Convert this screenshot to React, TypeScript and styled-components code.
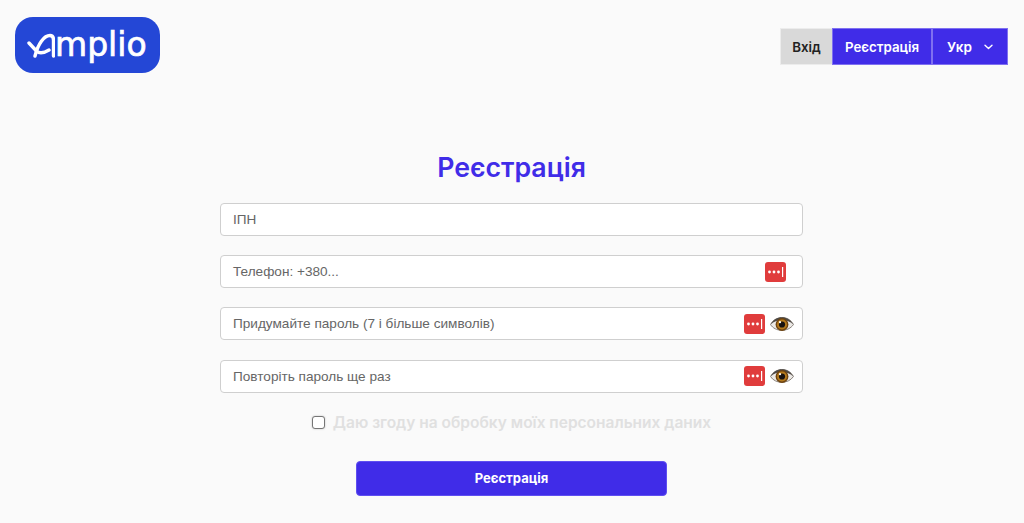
import React from 'react';
import styled, { createGlobalStyle } from 'styled-components';

const GlobalStyle = createGlobalStyle`
  html, body {
    margin: 0;
    padding: 0;
    background: #fafafa;
  }
  body {
    font-family: Inter, "Noto Sans", sans-serif;
    overflow: hidden;
  }
`;

const Page = styled.div`
  width: 1024px;
  height: 523px;
  display: flex;
  flex-direction: column;
`;

const Header = styled.header`
  display: flex;
  justify-content: space-between;
  align-items: flex-start;
  padding: 17px 16px 0 15px;
  height: 56px;
`;

const Logo = styled.div`
  width: 145px;
  height: 56px;
  border-radius: 18px;
  background: #2447d6;
  color: #fff;
  display: flex;
  align-items: center;
  padding-left: 12px;
  box-sizing: border-box;
`;

const LogoText = styled.span`
  font-family: "DejaVu Sans", sans-serif;
  font-size: 33px;
  line-height: 1;
  -webkit-text-stroke: 0.7px #fff;
  position: relative;
  top: -1px;
`;

const Nav = styled.nav`
  display: flex;
  margin-top: 11px;
  height: 37px;
`;

const NavItem = styled.a<{ $light?: boolean; $width: number }>`
  width: ${p => p.$width}px;
  display: flex;
  align-items: center;
  justify-content: center;
  gap: 9px;
  box-sizing: border-box;
  font-size: 13.3px;
  font-weight: 600;
  background: ${p => (p.$light ? '#d9d9d9' : '#402ce8')};
  color: ${p => (p.$light ? '#222' : '#fff')};
  border: 1px solid ${p => (p.$light ? '#ececec' : '#7f70f0')};
  border-right-width: ${p => (p.$light ? 0 : 1)}px;
`;

const LangLabel = styled.span`
  margin-right: 3px;
  font-size: 13.6px;
`;

const Main = styled.main`
  width: 583px;
  margin: 76px 0 0 220px;
  display: flex;
  flex-direction: column;
  align-items: center;
`;

const Title = styled.h1`
  margin: 0 0 18px;
  font-size: 26.7px;
  line-height: 36px;
  font-weight: 600;
  color: #402ce8;
`;

const Fields = styled.div`
  width: 100%;
  display: flex;
  flex-direction: column;
  gap: 19.2px;
`;

const Field = styled.div<{ $roomy?: boolean }>`
  height: 33px;
  box-sizing: border-box;
  border: 1px solid #cfcfcf;
  border-radius: 4px;
  background: #fff;
  display: flex;
  align-items: center;
  padding: 0 ${p => (p.$roomy ? 16 : 8)}px 0 12px;
  gap: 5px;
`;

const Placeholder = styled.span`
  flex: 1;
  font-family: "Liberation Sans", Arial, sans-serif;
  font-size: 13.6px;
  color: #666;
`;

const Consent = styled.label`
  display: flex;
  align-items: center;
  gap: 8px;
  margin-top: 20px;
  font-size: 15.5px;
  font-weight: 600;
  color: #e0e0e0;
  line-height: 20px;
`;

const Checkbox = styled.span`
  width: 13px;
  height: 13px;
  box-sizing: border-box;
  border: 1.5px solid #767676;
  border-radius: 3px;
  background: #fff;
  box-shadow: 0 0 2px rgba(0, 0, 0, 0.25);
`;

const Submit = styled.button`
  width: 311px;
  height: 35px;
  margin-top: 28px;
  border: 1px solid #5f4ff0;
  border-radius: 4px;
  background: #402ce8;
  color: #fff;
  font-family: inherit;
  font-size: 13px;
  font-weight: 700;
`;

const LogoMark = () => (
  <svg width="28" height="30" viewBox="0 0 28 30" fill="none" stroke="#fff" strokeWidth="3.4" strokeLinecap="round" strokeLinejoin="round">
    <path d="M2 13 L9 20.5 C12 24 17 23 22 20" />
    <path d="M8 26 C11 14 17 5.5 23 5.5 C25 5.5 26.5 7 26.5 10 L26.5 26" />
  </svg>
);

const Chevron = () => (
  <svg width="9" height="6" viewBox="0 0 9 6" fill="none" stroke="#fff" strokeWidth="1.4" strokeLinecap="round" strokeLinejoin="round">
    <path d="M1 1.2 L4.5 4.6 L8 1.2" />
  </svg>
);

const KeyIcon = () => (
  <svg width="21" height="20" viewBox="0 0 21 20">
    <rect width="21" height="20" rx="3" fill="#e03c3c" />
    <circle cx="4.5" cy="10" r="1.4" fill="#fff" />
    <circle cx="9" cy="10" r="1.4" fill="#fff" />
    <circle cx="13.5" cy="10" r="1.4" fill="#fff" />
    <rect x="17" y="5" width="1.2" height="10" fill="#fff" />
  </svg>
);

const EyeIcon = () => (
  <svg width="24" height="18" viewBox="0 0 24 18">
    <path d="M0.5 9.5 C5 1 18 -0.5 23.5 9.5 C18 17.5 5 17 0.5 9.5 Z" fill="#ece9e6" stroke="#8a837c" strokeWidth="1" />
    <path d="M0.8 9.5 C5 0.5 18 -0.5 23.2 9.5 C18 3.5 6 3.5 0.8 9.5 Z" fill="#4e4945" />
    <circle cx="12" cy="9.5" r="6.4" fill="#6e4310" />
    <circle cx="12" cy="9.5" r="5" fill="#b57a1c" />
    <circle cx="12" cy="9.5" r="3.1" fill="#181210" />
    <circle cx="10" cy="7.2" r="1.1" fill="#fff" />
  </svg>
);

const fields = [
  { label: 'ІПН' },
  { label: 'Телефон: +380...', key: true },
  { label: 'Придумайте пароль (7 і більше символів)', key: true, eye: true },
  { label: 'Повторіть пароль ще раз', key: true, eye: true },
];

export default function App() {
  return (
    <Page>
      <GlobalStyle />
      <Header>
        <Logo>
          <LogoMark />
          <LogoText>mplio</LogoText>
        </Logo>
        <Nav>
          <NavItem $light $width={52}>Вхід</NavItem>
          <NavItem $width={100}>Реєстрація</NavItem>
          <NavItem $width={76}><LangLabel>Укр</LangLabel><Chevron /></NavItem>
        </Nav>
      </Header>
      <Main>
        <Title>Реєстрація</Title>
        <Fields>
          {fields.map(f => (
            <Field key={f.label} $roomy={f.key && !f.eye}>
              <Placeholder>{f.label}</Placeholder>
              {f.key && <KeyIcon />}
              {f.eye && <EyeIcon />}
            </Field>
          ))}
        </Fields>
        <Consent>
          <Checkbox />
          Даю згоду на обробку моїх персональних даних
        </Consent>
        <Submit>Реєстрація</Submit>
      </Main>
    </Page>
  );
}
